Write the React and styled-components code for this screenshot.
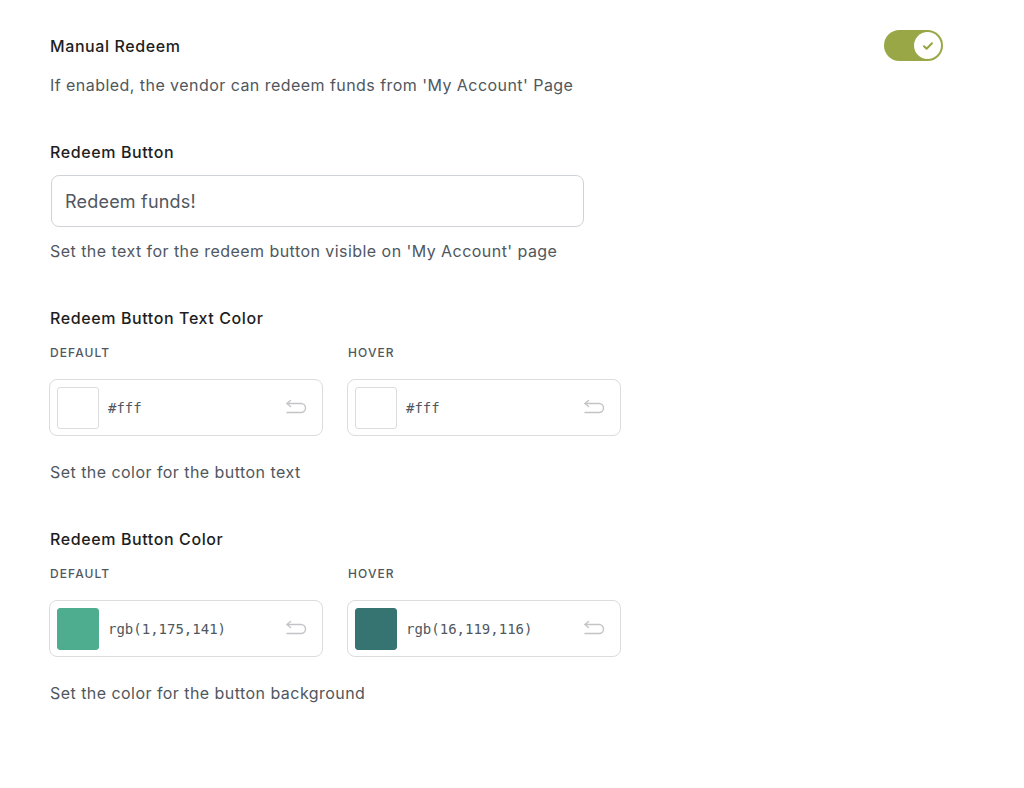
import React from "react";
import styled, { createGlobalStyle } from "styled-components";

const GlobalStyle = createGlobalStyle`
  body {
    margin: 0;
    background: #fff;
    font-family: Inter, "Noto Sans", "Liberation Sans", sans-serif;
    -webkit-font-smoothing: antialiased;
  }
`;

const UndoIcon = () => (
  <svg width="24" height="18" viewBox="0 0 24 18" fill="none">
    <path
      d="M3 4.5h14a4.5 4.5 0 0 1 0 9H3"
      stroke="#c3c4c7"
      strokeWidth="1.4"
      strokeLinecap="round"
    />
    <path
      d="M6.5 1.5L3 4.5l3.5 3"
      stroke="#c3c4c7"
      strokeWidth="1.4"
      strokeLinecap="round"
      strokeLinejoin="round"
    />
  </svg>
);

const ColorField = ({ swatch, value, bordered }) => (
  <ColorBox>
    <Swatch $color={swatch} $bordered={bordered} />
    <ColorValue>{value}</ColorValue>
    <UndoButton>
      <UndoIcon />
    </UndoButton>
  </ColorBox>
);

const App = () => {
  return (
    <Page>
      <GlobalStyle />
      <Section>
        <HeadRow>
          <Title>Manual Redeem</Title>
          <Toggle>
            <Knob>
              <svg width="12" height="10" viewBox="0 0 12 10" fill="none">
                <path
                  d="M2 5.2l2.6 2.5L10 2.3"
                  stroke="#97a540"
                  strokeWidth="2"
                  strokeLinecap="round"
                  strokeLinejoin="round"
                />
              </svg>
            </Knob>
          </Toggle>
        </HeadRow>
        <Help>If enabled, the vendor can redeem funds from 'My Account' Page</Help>
      </Section>

      <Section>
        <Title>Redeem Button</Title>
        <TextInput defaultValue="Redeem funds!" />
        <Help>Set the text for the redeem button visible on 'My Account' page</Help>
      </Section>

      <Section>
        <Title>Redeem Button Text Color</Title>
        <ColorGrid>
          <div>
            <SubLabel>Default</SubLabel>
            <ColorField swatch="#fff" value="#fff" bordered />
          </div>
          <div>
            <SubLabel>Hover</SubLabel>
            <ColorField swatch="#fff" value="#fff" bordered />
          </div>
        </ColorGrid>
        <Help $gap={24}>Set the color for the button text</Help>
      </Section>

      <Section>
        <Title>Redeem Button Color</Title>
        <ColorGrid>
          <div>
            <SubLabel>Default</SubLabel>
            <ColorField swatch="#4ead8e" value="rgb(1,175,141)" />
          </div>
          <div>
            <SubLabel>Hover</SubLabel>
            <ColorField swatch="#367471" value="rgb(16,119,116)" />
          </div>
        </ColorGrid>
        <Help $gap={24}>Set the color for the button background</Help>
      </Section>
    </Page>
  );
};

const Page = styled.div`
  padding: 30px 0 60px 49px;
  width: 894px;
`;

const Section = styled.section`
  display: flex;
  flex-direction: column;
  align-items: flex-start;
  & + & {
    margin-top: 43px;
  }
`;

const HeadRow = styled.div`
  display: flex;
  align-items: center;
  justify-content: space-between;
  align-self: stretch;
  height: 31px;
`;

const Title = styled.div`
  margin-left: 1px;
  font-size: 16px;
  line-height: 24px;
  font-weight: 500;
  letter-spacing: 0.6px;
  color: #1e1e1e;
`;

const Help = styled.p`
  margin: ${(p) => p.$gap || 12}px 0 0 1px;
  font-size: 16px;
  line-height: 24px;
  letter-spacing: 0.45px;
  color: #50575e;
`;

const Toggle = styled.div`
  width: 59px;
  height: 31px;
  border-radius: 16px;
  background: #99a746;
  display: flex;
  align-items: center;
  justify-content: flex-end;
  padding: 0 2px;
  box-sizing: border-box;
`;

const Knob = styled.div`
  width: 27px;
  height: 27px;
  border-radius: 50%;
  background: #fff;
  display: flex;
  align-items: center;
  justify-content: center;
`;

const TextInput = styled.input`
  margin-top: 11px;
  margin-left: 2px;
  width: 533px;
  height: 52px;
  box-sizing: border-box;
  border: 1px solid #cfd3d9;
  border-radius: 8px;
  padding: 0 13px;
  font-family: inherit;
  font-size: 18px;
  letter-spacing: 0.2px;
  color: #50575e;
  outline: none;
`;

const ColorGrid = styled.div`
  display: grid;
  grid-template-columns: 274px 274px;
  column-gap: 24px;
  margin-top: 15px;
`;

const SubLabel = styled.div`
  margin-left: 1px;
  font-size: 12px;
  line-height: 16px;
  font-weight: 500;
  letter-spacing: 1.1px;
  text-transform: uppercase;
  color: #50575e;
  margin-bottom: 18px;
`;

const ColorBox = styled.div`
  height: 57px;
  box-sizing: border-box;
  border: 1px solid #dcdcde;
  border-radius: 8px;
  display: flex;
  align-items: center;
  padding: 0 14px 0 7px;
`;

const Swatch = styled.div`
  width: 42px;
  height: 42px;
  box-sizing: border-box;
  border-radius: 3px;
  background: ${(p) => p.$color};
  border: 1px solid ${(p) => (p.$bordered ? "#dcdcde" : p.$color)};
  flex-shrink: 0;
`;

const ColorValue = styled.span`
  margin-left: 9px;
  flex: 1;
  font-family: "DejaVu Sans Mono", "Liberation Mono", monospace;
  font-size: 14px;
  color: #50575e;
`;

const UndoButton = styled.span`
  display: flex;
  align-items: center;
`;

export default App;
